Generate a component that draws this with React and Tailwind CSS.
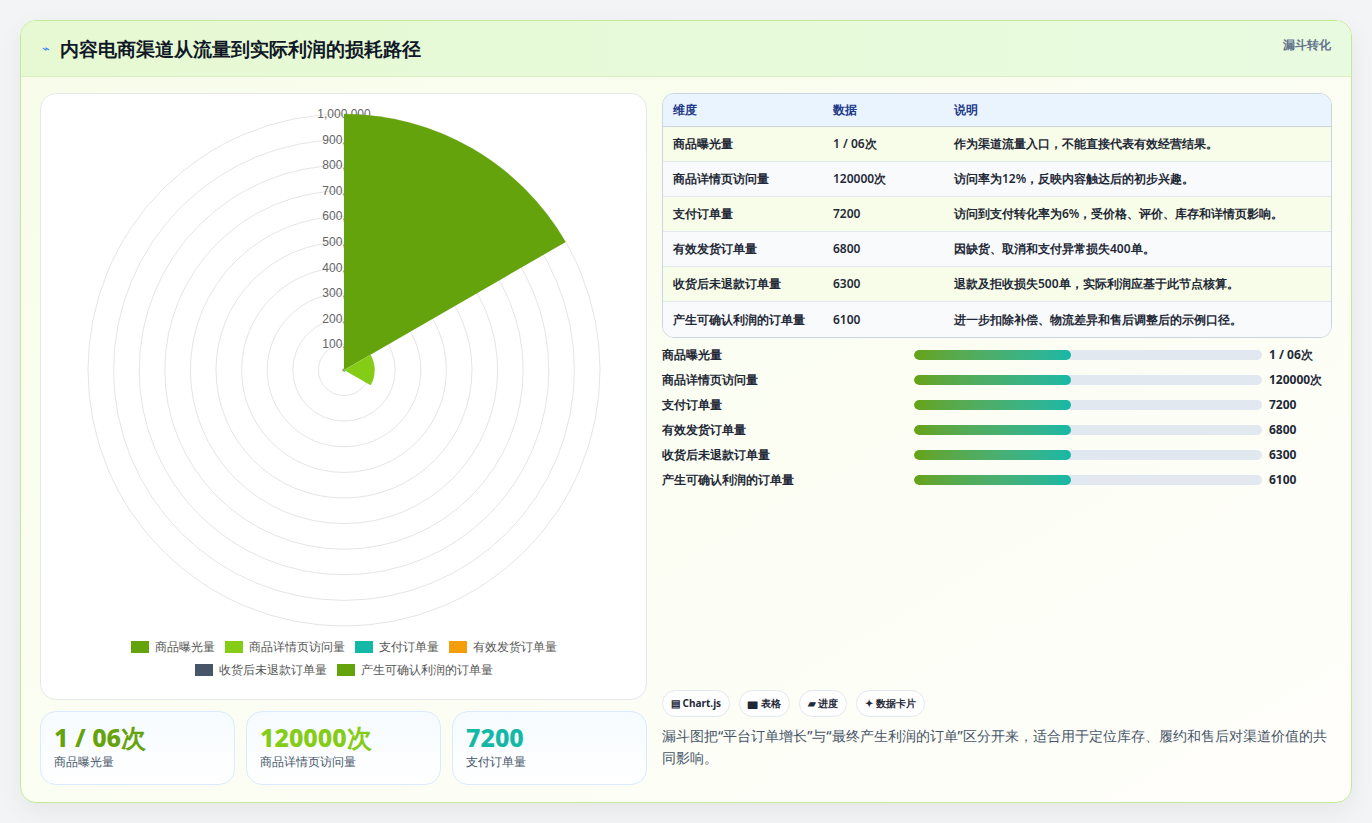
import React from "react";

const rows = [
  ["商品曝光量", "1 / 06次", "作为渠道流量入口，不能直接代表有效经营结果。"],
  ["商品详情页访问量", "120000次", "访问率为12%，反映内容触达后的初步兴趣。"],
  ["支付订单量", "7200", "访问到支付转化率为6%，受价格、评价、库存和详情页影响。"],
  ["有效发货订单量", "6800", "因缺货、取消和支付异常损失400单。"],
  ["收货后未退款订单量", "6300", "退款及拒收损失500单，实际利润应基于此节点核算。"],
  ["产生可确认利润的订单量", "6100", "进一步扣除补偿、物流差异和售后调整后的示例口径。"],
];

const legend = [
  ["商品曝光量", "bg-[#65a30d]"],
  ["商品详情页访问量", "bg-[#84cc16]"],
  ["支付订单量", "bg-[#14b8a6]"],
  ["有效发货订单量", "bg-[#f59e0b]"],
  ["收货后未退款订单量", "bg-[#475569]"],
  ["产生可确认利润的订单量", "bg-[#65a30d]"],
];

function arc(cx, cy, r, a0, a1) {
  const rad = (d) => (d * Math.PI) / 180;
  const x0 = cx + r * Math.cos(rad(a0));
  const y0 = cy + r * Math.sin(rad(a0));
  const x1 = cx + r * Math.cos(rad(a1));
  const y1 = cy + r * Math.sin(rad(a1));
  return `M${cx},${cy} L${x0},${y0} A${r},${r} 0 0 1 ${x1},${y1} Z`;
}

function Polar() {
  const cx = 303;
  const cy = 276;
  const step = 25.6;
  const rings = [1, 2, 3, 4, 5, 6, 7, 8, 9, 10];
  const labels = ["100,000", "200,000", "300,000", "400,000", "500,000", "600,000", "700,000", "800,000", "900,000", "1,000,000"];
  return (
    <svg width="606" height="540" viewBox="0 0 606 540">
      {rings.map((i) => (
        <circle key={i} cx={cx} cy={cy} r={i * step} fill="none" stroke="#e5e5e5" strokeWidth="1" />
      ))}
      {labels.map((l, i) => (
        <text key={l} x={cx} y={cy - (i + 1) * step + 4} textAnchor="middle" fontSize="12" fill="#666" fontFamily="Liberation Sans, sans-serif">
          {l}
        </text>
      ))}
      <path d={arc(cx, cy, 256, -90, -30)} fill="#65a30d" />
      <path d={arc(cx, cy, 30.7, -30, 30)} fill="#84cc16" />
      <path d={arc(cx, cy, 1.8, 30, 90)} fill="#14b8a6" />
      <path d={arc(cx, cy, 1.7, 90, 150)} fill="#f59e0b" />
      <path d={arc(cx, cy, 1.6, 150, 210)} fill="#475569" />
      <path d={arc(cx, cy, 1.6, 210, 270)} fill="#65a30d" />
    </svg>
  );
}

export default function App() {
  return (
    <div className="min-h-[823px] bg-[#f3f4f6] p-5 font-['Noto_Sans_CJK_SC','Noto_Sans',sans-serif]">
      <div className="h-[783px] w-[1332px] overflow-hidden rounded-2xl border border-[#c5ea95] bg-gradient-to-br from-[#f7fde9] to-[#fffefb] shadow-[0_8px_24px_rgba(0,0,0,0.06)]">
        <div className="flex h-[56px] items-start justify-between border-b border-[#dcefc4] bg-gradient-to-r from-[#e6f9d2] to-[#e8fbe0] pl-[21px] pr-5">
          <div className="flex h-[56px] items-center gap-[10px]">
            <span className="text-[13px] text-[#3b82f6]">⌁</span>
            <h1 className="text-[19px] font-bold text-[#111827]">内容电商渠道从流量到实际利润的损耗路径</h1>
          </div>
          <div className="pt-[15px] text-[12px] font-bold text-[#64748b]">漏斗转化</div>
        </div>
        <div className="flex gap-[15px] p-[19px] pt-[16px]">
          <div className="flex w-[607px] flex-col gap-[11px]">
            <div className="flex h-[607px] flex-col items-center rounded-2xl border border-[#e5e7eb] bg-white">
              <Polar />
              <div className="mt-[4px] flex w-[460px] flex-wrap justify-center gap-x-[10px] gap-y-[5px] text-[12px] text-[#555]">
                {legend.map(([l, c], i) => (
                  <div key={i} className="flex items-center gap-[6px]">
                    <span className={`h-[12px] w-[18px] ${c}`} />
                    {l}
                  </div>
                ))}
              </div>
            </div>
            <div className="grid grid-cols-3 gap-[11px]">
              {[
                ["1 / 06次", "商品曝光量", "text-[#65a30d]"],
                ["120000次", "商品详情页访问量", "text-[#84cc16]"],
                ["7200", "支付订单量", "text-[#14b8a6]"],
              ].map(([v, l, c]) => (
                <div key={l} className="h-[74px] rounded-2xl border border-[#dbeafe] bg-gradient-to-b from-[#f6fbff] to-white px-[13px] pt-[9px]">
                  <div className={`text-[25px] font-extrabold leading-[32px] ${c}`}>{v}</div>
                  <div className="text-[12px] text-[#475569]">{l}</div>
                </div>
              ))}
            </div>
          </div>
          <div className="flex w-[672px] flex-col">
            <div className="overflow-hidden rounded-xl border border-[#cbd5e1] text-[12px] text-[#1f2937]">
              <div className="flex h-[33px] items-center border-b border-[#cbd5e1] bg-[#eaf4ff] font-bold text-[#1e3a8a]">
                <div className="w-[170px] pl-[10px]">维度</div>
                <div className="w-[121px]">数据</div>
                <div>说明</div>
              </div>
              {rows.map((r, i) => (
                <div key={i} className={`flex h-[35px] items-center ${i < 5 ? "border-b border-[#e2e8f0]" : ""} ${i % 2 === 0 ? "bg-[#f7fde8]" : "bg-[#f8fafc]"}`}>
                  <div className="w-[170px] pl-[10px] font-semibold">{r[0]}</div>
                  <div className="w-[121px] font-semibold">{r[1]}</div>
                  <div className="font-semibold">{r[2]}</div>
                </div>
              ))}
            </div>
            <div className="mt-[8px] flex flex-col gap-[7px]">
              {rows.map((r, i) => (
                <div key={i} className="flex h-[18px] items-center text-[12px] font-semibold text-[#1f2937]">
                  <div className="w-[252px]">{r[0]}</div>
                  <div className="h-[10px] w-[348px] overflow-hidden rounded-full bg-[#e2e8f0]">
                    <div className="h-full w-[45%] rounded-full bg-gradient-to-r from-[#65a30d] to-[#14b8a6]" />
                  </div>
                  <div className="pl-[7px] font-bold">{r[1]}</div>
                </div>
              ))}
            </div>
            <div className="mt-auto flex gap-[9px] text-[10px] font-bold text-[#1f2937]">
              {["▤ Chart.js", "▆ 表格", "▰ 进度", "✦ 数据卡片"].map((t) => (
                <span key={t} className="rounded-full border border-[#e2e8f0] bg-white px-[8px] py-[5px]">{t}</span>
              ))}
            </div>
            <p className="mt-[8px] mb-[16px] text-[13.5px] font-medium leading-[22px] text-[#475569]">
              漏斗图把“平台订单增长”与“最终产生利润的订单”区分开来，适合用于定位库存、履约和售后对渠道价值的共同影响。
            </p>
          </div>
        </div>
      </div>
    </div>
  );
}
